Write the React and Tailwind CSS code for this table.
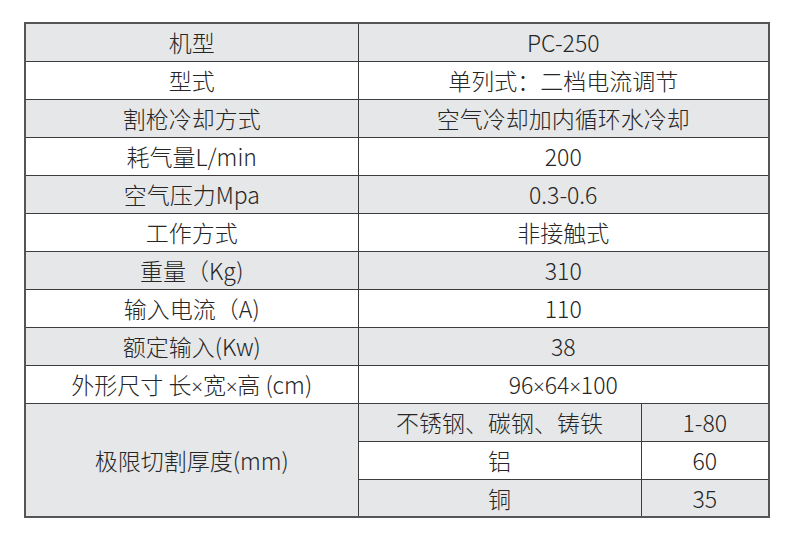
const rows = [
  ['机型', 'PC-250'],
  ['型式', '单列式：二档电流调节'],
  ['割枪冷却方式', '空气冷却加内循环水冷却'],
  ['耗气量L/min', '200'],
  ['空气压力Mpa', '0.3-0.6'],
  ['工作方式', '非接触式'],
  ['重量（Kg)', '310'],
  ['输入电流（A)', '110'],
  ['额定输入(Kw)', '38'],
  ['外形尺寸 长×宽×高 (cm)', '96×64×100'],
]

const cut = [
  ['不锈钢、碳钢、铸铁', '1-80'],
  ['铝', '60'],
  ['铜', '35'],
]

const cell = 'border border-[#3c3c3c] text-center align-middle p-0 whitespace-nowrap'

// × in the CJK font is full width; the original uses a narrow one
function Txt({ s }) {
  const parts = s.split('×')
  return parts.map((p, i) => (
    <span key={i}>
      {i > 0 && <span className="font-['Noto_Sans'] text-[20px]">×</span>}
      {p}
    </span>
  ))
}

export default function App() {
  return (
    <div
      className="w-[791px] h-[534px] bg-white pt-[22px] pl-[24px] text-[23px] font-light text-[#262626]"
      style={{ fontFamily: '"Noto Sans CJK SC", "Noto Sans", sans-serif' }}
    >
      <table className="border-collapse border-2 border-[#555] table-fixed w-[744px]">
        <colgroup>
          <col className="w-[333px]" />
          <col className="w-[283px]" />
          <col className="w-[128px]" />
        </colgroup>
        <tbody>
          {rows.map(([k, v], i) => (
            <tr key={k} className={`h-[38px] ${i % 2 === 0 ? 'bg-[#e6e7e8]' : 'bg-white'}`}>
              <td className={cell}><Txt s={k} /></td>
              <td className={cell} colSpan={2}><Txt s={v} /></td>
            </tr>
          ))}
          {cut.map(([k, v], i) => (
            <tr key={k} className={`h-[38px] ${i % 2 === 0 ? 'bg-[#e6e7e8]' : 'bg-white'}`}>
              {i === 0 && (
                <td className={`${cell} bg-[#e6e7e8]`} rowSpan={3}>极限切割厚度(mm)</td>
              )}
              <td className={cell}>{k}</td>
              <td className={cell}>{v}</td>
            </tr>
          ))}
        </tbody>
      </table>
    </div>
  )
}
